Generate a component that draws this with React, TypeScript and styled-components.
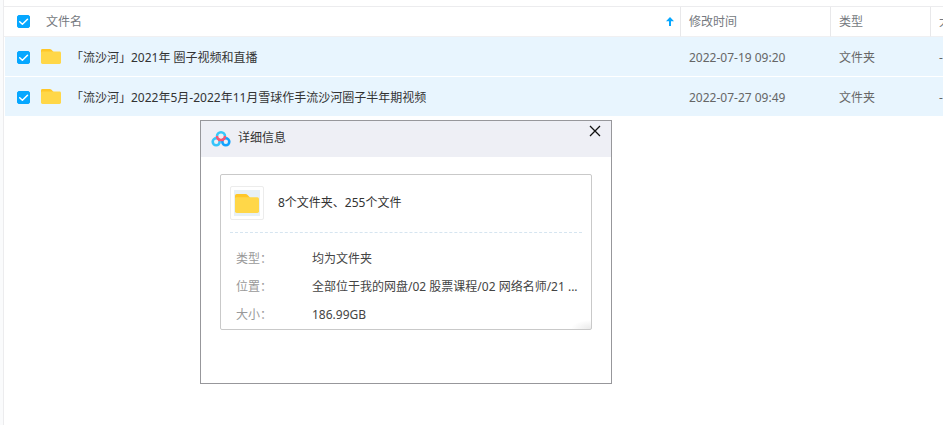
import React, { useState } from "react";
import styled, { createGlobalStyle } from "styled-components";

const GlobalStyle = createGlobalStyle`
  * { box-sizing: border-box; }
  body {
    margin: 0;
    background: #fff;
    color: #333;
    font: 12px/16px "Noto Sans", "Noto Sans CJK SC", sans-serif;
    text-spacing-trim: space-all;
    overflow: hidden;
  }
  button, input { font: inherit; }
`;

const Page = styled.div`
  position: relative;
  display: flex;
  min-height: 100vh;
`;

const Sidebar = styled.aside`
  flex: 0 0 4px;
  background: #fafbfc;
  border-right: 1px solid #ececee;
`;

const Main = styled.main`
  flex: 1;
  min-width: 0;
  padding-top: 6px;
  overflow: hidden;
`;

const FileTable = styled.table`
  width: calc(100% + 88px);
  border-collapse: separate;
  border-spacing: 0;
  table-layout: fixed;
  border-top: 1px solid #ececee;
`;

const Col = styled.col<{ $width?: number }>`
  width: ${(p) => (p.$width ? `${p.$width}px` : "auto")};
`;

const HeadCell = styled.th<{ $first?: boolean }>`
  height: 30px;
  padding: 0 8px 0 ${(p) => (p.$first ? 13 : 8)}px;
  border-bottom: 1px solid #f0f0f2;
  border-right: 1px solid #e8e8ea;
  color: #757980;
  font-weight: 400;
  text-align: left;
`;

const HeadName = styled.div`
  display: flex;
  align-items: center;
  gap: 16px;
`;

const SortButton = styled.button`
  display: flex;
  margin-left: auto;
  margin-right: -2px;
  padding: 0;
  border: 0;
  background: none;
  cursor: pointer;
`;

const BodyCell = styled.td<{ $first?: boolean }>`
  height: 40px;
  padding: 2px 8px 0 ${(p) => (p.$first ? 12 : 8)}px;
  border-bottom: 1px solid #fff;
  border-left: ${(p) => (p.$first ? "1px solid #fff" : "0")};
  background: #e8f5fe;
  color: #666;
`;

const FileName = styled.label`
  display: flex;
  align-items: center;
  color: #333;
  white-space: nowrap;
`;

const FileFolder = styled.span`
  display: flex;
  width: 20px;
  margin: 0 10px 2px 11px;
`;

const TickFrame = styled.span`
  position: relative;
  display: flex;
  flex: none;
  width: 13px;
  height: 13px;

  svg {
    position: absolute;
    inset: 0;
    pointer-events: none;
  }
`;

const TickInput = styled.input`
  appearance: none;
  width: 13px;
  height: 13px;
  margin: 0;
  border: 1px solid #c4c8d0;
  border-radius: 2px;
  background: #fff;

  &:checked {
    border-color: #06a7ff;
    background: #06a7ff;
  }
`;

const Dialog = styled.section`
  position: absolute;
  left: 200px;
  top: 120px;
  width: 412px;
  border: 1px solid #97979b;
  background: #fff;
`;

const DialogBar = styled.header`
  display: flex;
  align-items: center;
  height: 36px;
  padding: 0 10px 2px;
  background: #eeeff5;
`;

const DialogTitle = styled.h2`
  flex: 1;
  margin: 0 0 0 7px;
  color: #333;
  font-size: 12px;
  font-weight: 400;
`;

const CloseButton = styled.button`
  display: flex;
  align-self: flex-start;
  margin-top: 4px;
  padding: 0;
  border: 0;
  background: none;
  cursor: pointer;
`;

const Card = styled.div`
  margin: 17px 19px 53px;
  padding: 11px 9px 0;
  border: 1px solid #c9c9c9;
  border-radius: 2px;
  background: radial-gradient(ellipse 20px 9px at 100% 100%, #e9e9e9, #fff);
`;

const Summary = styled.div`
  display: flex;
  align-items: center;
  gap: 14px;
  padding-bottom: 12px;
  border-bottom: 1px dashed #d6e5f0;
`;

const Thumb = styled.div`
  width: 34px;
  height: 34px;
  padding: 3px;
  border: 1px solid #ececec;
  border-radius: 2px;
`;

const ThumbInner = styled.div`
  display: flex;
  align-items: center;
  justify-content: center;
  height: 26px;
  background: #e7f0f5;
`;

const Details = styled.dl`
  display: grid;
  grid-template-columns: 76px 1fr;
  margin: 12px 0 0 6px;
  line-height: 28px;
`;

const Term = styled.dt`
  color: #999;
`;

const Value = styled.dd`
  margin: 0 -4px 0 0;
  color: #444;
  white-space: nowrap;
`;

function Tick({ label }: { label: string }) {
  const [checked, setChecked] = useState(true);
  return (
    <TickFrame>
      <TickInput
        type="checkbox"
        aria-label={label}
        checked={checked}
        onChange={(e) => setChecked(e.target.checked)}
      />
      {checked && (
        <svg width="13" height="13" viewBox="0 0 13 13" fill="none" aria-hidden="true">
          <path d="M2.7 6.8 5.4 9.3 10.5 4.2" stroke="#fff" strokeWidth="1.5" strokeLinecap="round" strokeLinejoin="round" />
        </svg>
      )}
    </TickFrame>
  );
}

function Folder({ width, height }: { width: number; height: number }) {
  return (
    <svg width={width} height={height} viewBox="0 0 20 15" preserveAspectRatio="none" aria-hidden="true">
      <path d="M1.4 0h7.4q1 0 1.700.8L12.600 3V9H0V1.400Q0 0 1.400 0Z" fill="#ffc728" />
      <path d="M0 3.200q.3-.6 1.200-.6h17.400Q20 2.600 20 4v9.600q0 1.400-1.400 1.400H1.400Q0 15 0 13.600Z" fill="#ffd748" />
    </svg>
  );
}

function Logo() {
  return (
    <svg width="20" height="17" viewBox="0 0 20 17" fill="none" strokeWidth="2.6" aria-hidden="true">
      <circle cx="5.200" cy="11.800" r="3.500" stroke="#35c4fb" />
      <circle cx="14.800" cy="11.800" r="3.500" stroke="#12a3ff" />
      <path d="M6 6.200a4 4 0 1 1 8 0" stroke="#36c8fa" />
      <path d="M6 6a4 4 0 0 0 8 0" stroke="#fa5674" />
      <path d="m7 8.600 1.600 2.200M13 8.600l-1.600 2.200" stroke="#fa5674" strokeWidth="2" />
    </svg>
  );
}

const files = [
  { name: "「流沙河」2021年 圈子视频和直播", date: "2022-07-19 09:20" },
  { name: "「流沙河」2022年5月-2022年11月雪球作手流沙河圈子半年期视频", date: "2022-07-27 09:49" },
];

const details = [
  ["类型：", "均为文件夹"],
  ["位置：", "全部位于我的网盘/02 股票课程/02 网络名师/21 ..."],
  ["大小：", "186.99GB"],
];

export default function App() {
  const [open, setOpen] = useState(true);
  return (
    <Page>
      <GlobalStyle />
      <Sidebar />
      <Main>
        <FileTable>
          <colgroup>
            <Col />
            <Col $width={150} />
            <Col $width={100} />
            <Col $width={100} />
          </colgroup>
          <thead>
            <tr>
              <HeadCell $first>
                <HeadName>
                  <Tick label="全选" />
                  <span>文件名</span>
                  <SortButton type="button" aria-label="排序">
                    <svg width="8" height="9" viewBox="0 0 8 9" aria-hidden="true">
                      <path d="M4 0 8 4.300H5V9H3V4.300H0Z" fill="#06a7ff" />
                    </svg>
                  </SortButton>
                </HeadName>
              </HeadCell>
              <HeadCell>修改时间</HeadCell>
              <HeadCell>类型</HeadCell>
              <HeadCell>大小</HeadCell>
            </tr>
          </thead>
          <tbody>
            {files.map((f) => (
              <tr key={f.name}>
                <BodyCell $first>
                  <FileName>
                    <Tick label={f.name} />
                    <FileFolder>
                      <Folder width={20} height={15} />
                    </FileFolder>
                    {f.name}
                  </FileName>
                </BodyCell>
                <BodyCell>{f.date}</BodyCell>
                <BodyCell>文件夹</BodyCell>
                <BodyCell>-</BodyCell>
              </tr>
            ))}
          </tbody>
        </FileTable>
      </Main>
      {open && (
        <Dialog role="dialog" aria-labelledby="dialog-title">
          <DialogBar>
            <Logo />
            <DialogTitle id="dialog-title">详细信息</DialogTitle>
            <CloseButton type="button" aria-label="关闭" onClick={() => setOpen(false)}>
              <svg width="12" height="12" viewBox="0 0 12 12" aria-hidden="true">
                <path d="m1 1 10 10M11 1 1 11" stroke="#111" strokeWidth="1.300" />
              </svg>
            </CloseButton>
          </DialogBar>
          <Card>
            <Summary>
              <Thumb>
                <ThumbInner>
                  <Folder width={24} height={19} />
                </ThumbInner>
              </Thumb>
              <span>8个文件夹、255个文件</span>
            </Summary>
            <Details>
              {details.map(([term, value]) => (
                <React.Fragment key={term}>
                  <Term>{term}</Term>
                  <Value>{value}</Value>
                </React.Fragment>
              ))}
            </Details>
          </Card>
        </Dialog>
      )}
    </Page>
  );
}
